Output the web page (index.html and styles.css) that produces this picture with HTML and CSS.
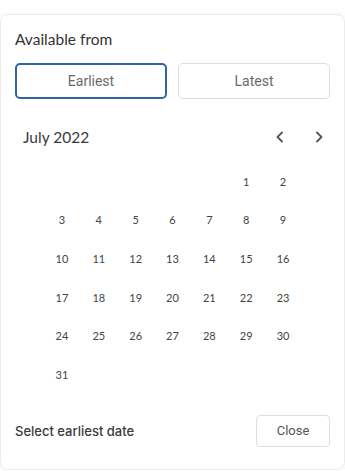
FILE: index.html
```html
<!DOCTYPE html>
<html>
<head>
<meta charset="utf-8">
<link rel="stylesheet" href="styles.css">
</head>
<body>
<div class="card">
  <div class="title">Available from</div>
  <div class="toggle">
    <button class="tbtn active">Earliest</button>
    <button class="tbtn">Latest</button>
  </div>
  <div class="month-head">
    <span class="month">July 2022</span>
    <div class="navs">
      <span class="nav"><svg width="10" height="12" viewBox="0 0 10 12"><path d="M7 1.5 L2.5 6 L7 10.5" fill="none" stroke="#555" stroke-width="1.8" stroke-linecap="round" stroke-linejoin="round"/></svg></span>
      <span class="nav"><svg width="10" height="12" viewBox="0 0 10 12"><path d="M3 1.5 L7.5 6 L3 10.5" fill="none" stroke="#555" stroke-width="1.8" stroke-linecap="round" stroke-linejoin="round"/></svg></span>
    </div>
  </div>
  <div class="days">
    <span></span><span></span><span></span><span></span><span></span><span>1</span><span>2</span>
    <span>3</span><span>4</span><span>5</span><span>6</span><span>7</span><span>8</span><span>9</span>
    <span>10</span><span>11</span><span>12</span><span>13</span><span>14</span><span>15</span><span>16</span>
    <span>17</span><span>18</span><span>19</span><span>20</span><span>21</span><span>22</span><span>23</span>
    <span>24</span><span>25</span><span>26</span><span>27</span><span>28</span><span>29</span><span>30</span>
    <span>31</span>
  </div>
  <div class="footer">
    <span class="hint">Select earliest date</span>
    <button class="close">Close</button>
  </div>
</div>
</body>
</html>
```
FILE: styles.css
```css
html, body { margin: 0; padding: 0; background: #fff; }
body { padding-top: 14px; font-family: "Lato", "Noto Sans", sans-serif; color: #333; }
.card {
  border: 1px solid #ececec;
  border-radius: 8px;
  box-shadow: 0 0 6px rgba(0,0,0,0.06);
  padding: 14px 14px 22px;
  height: 456px;
  box-sizing: border-box;
}
.title { font-size: 15.5px; line-height: 20px; color: #333; }
.toggle { display: grid; grid-template-columns: 1fr 1fr; gap: 11px; margin-top: 14px; }
.tbtn {
  height: 36px; border: 1px solid #dedede; border-radius: 5px; background: #fff;
  font-family: "Roboto", sans-serif; font-size: 14px; color: #6a6a6a; padding: 0;
}
.tbtn.active { border: 2px solid #2f65a5; }
.month-head { display: flex; align-items: center; justify-content: space-between; height: 38px; margin-top: 19px; padding-left: 8px; }
.month { font-size: 15.5px; color: #3a3a3a; }
.navs { display: flex; gap: 29px; padding-right: 6px; }
.nav { display: flex; width: 10px; height: 12px; }
.days {
  display: grid; grid-template-columns: repeat(7, 36.85px); grid-auto-rows: 38.6px;
  justify-content: center; margin-top: 6px; font-size: 11px; color: #444;
}
.days span { display: flex; align-items: center; justify-content: center; }
.footer { display: flex; align-items: center; justify-content: space-between; margin-top: 21px; }
.hint { font-family: "Inter", "Lato", sans-serif; font-size: 13px; font-weight: 500; color: #3a3a3a; }
.close {
  width: 74px; height: 32px; border: 1px solid #dedede; border-radius: 4px; background: #fff;
  font-family: "Roboto", sans-serif; font-size: 13px; color: #555; padding: 0;
}
```
